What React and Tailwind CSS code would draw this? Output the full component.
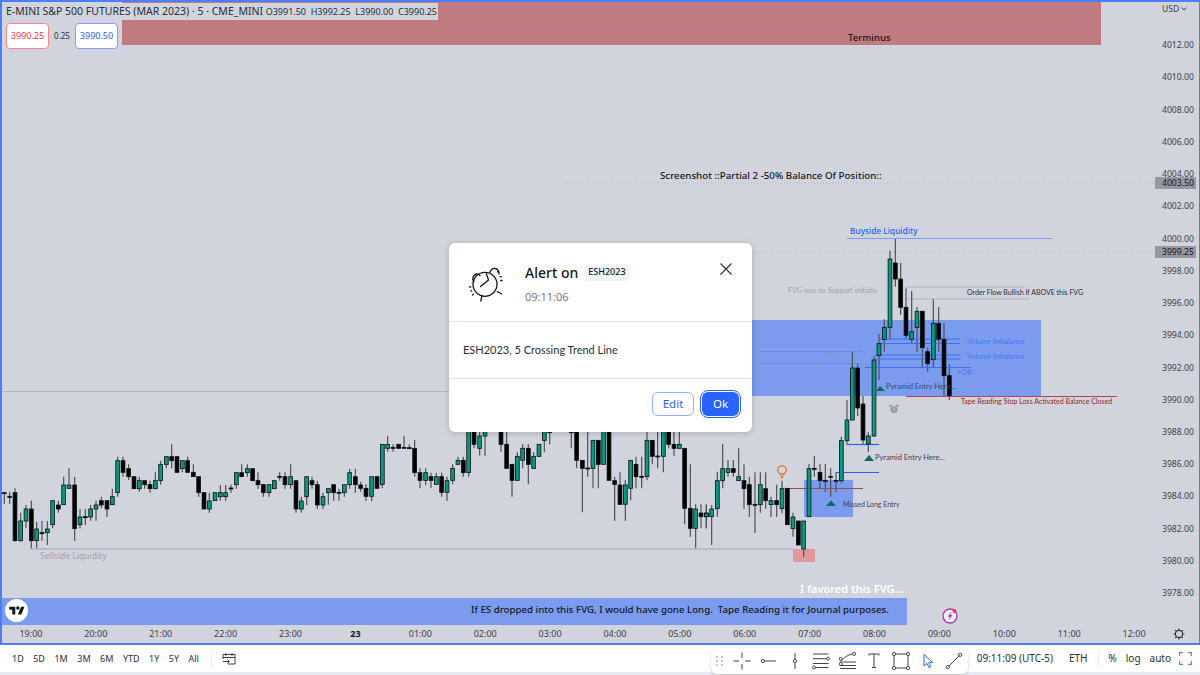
import React from "react";

// candle rows are [x, wickTop, bodyTop, bodyBottom, wickBottom, up], read off in 3x crop units
const panels = [
  { ox: 0, oy: 420, rows: [
    [13,218,218,220,252,0],[29,215,229,231,252,0],[45,205,218,362,365,0],[62,278,303,362,365,1],[78,255,267,303,325,1],
    [94,242,267,362,385,0],[110,305,327,362,385,1],[126,303,338,340,362,0],[142,303,327,338,375,1],[158,242,242,314,325,1],
    [175,242,255,267,278,0],[191,170,195,254,255,1],[207,145,195,205,205,1],[224,170,195,326,362,0],[240,267,291,314,325,1],
    [256,267,290,292,315,0],[272,255,267,291,302,1],[288,242,255,267,302,1],[304,230,242,255,265,0],[321,242,242,267,290,0],
    [337,206,230,254,255,1],[353,110,122,218,230,1],[369,110,122,157,170,0],[386,133,146,170,180,0],[402,170,170,206,206,0],
    [418,170,182,206,215,1],[434,182,182,194,206,0],[450,182,194,206,218,0],[466,157,182,206,206,1],[482,122,133,182,194,1],
    [499,110,110,133,145,1],[515,73,110,122,145,0],[531,110,110,157,157,0],[547,122,122,146,157,1],[563,110,122,157,157,0],
    [580,133,157,170,170,0],[596,170,170,218,230,0],[612,218,218,267,267,0],[628,218,243,267,278,1],[645,218,218,242,242,1],
    [661,195,218,230,242,1],[677,195,218,230,242,1],[693,194,204,206,218,0],[709,157,158,194,206,1],[725,133,158,170,170,0],
    [742,133,146,158,170,1],[758,146,146,182,182,0],[774,157,182,194,206,0],[790,194,194,218,230,0],[807,194,194,218,230,1],
    [823,182,182,206,206,1],[839,157,169,171,182,0],[855,157,170,194,206,0],[872,133,170,194,206,1],[888,182,182,267,278,0],
    [904,230,243,267,278,1],[920,170,170,230,255,1],[936,170,182,194,206,0],[952,182,194,255,267,0],[969,218,230,255,267,1],
    [985,206,206,218,254,1],[1001,194,194,218,242,0],[1017,206,217,219,242,0],[1033,194,194,218,230,1],[1049,146,158,194,206,1],
    [1066,146,170,194,218,0],
  ]},
  { ox: 350, oy: 425, rows: [
    [32,170,180,190,200,0],[48,178,190,214,228,0],[65,155,155,214,228,1],[81,155,155,190,190,0],[97,58,58,178,190,1],
    [113,33,58,70,80,1],[129,58,67,69,80,0],[146,58,58,70,70,0],[162,33,67,69,70,0],[178,58,68,70,70,0],
    [194,45,70,143,155,0],[210,130,143,166,190,0],[227,130,143,166,180,1],[243,143,155,166,190,0],[259,143,155,178,178,1],
    [275,143,155,202,215,0],[291,155,167,202,228,1],[308,118,130,166,178,1],[324,95,106,118,118,1],[340,95,106,143,155,0],
    [356,20,20,143,155,1],[372,20,20,58,70,0],[389,20,33,70,92,1],[405,20,20,33,92,1],[453,20,20,58,80,0],
    [470,20,58,130,130,0],[486,118,118,166,215,0],[502,82,94,166,167,1],[518,58,70,106,130,1],[535,58,70,118,178,0],
    [551,82,94,130,130,1],[567,58,58,94,94,1],[583,20,20,46,82,1],[599,20,20,20,58,0],[664,20,20,21,70,0],
    [680,20,20,106,130,0],[697,106,106,130,262,0],[713,20,129,131,155,0],[729,45,46,130,190,1],[745,46,46,118,190,0],
    [761,20,20,118,118,1],[777,20,20,166,166,0],[794,155,167,178,287,0],[810,142,180,238,240,0],[826,165,180,238,287,1],
    [842,106,106,190,226,1],[858,95,118,155,190,0],[875,95,154,156,190,0],[891,20,46,155,166,1],[907,45,46,94,118,0],
    [923,20,93,95,130,0],[940,20,20,94,142,1],[956,20,20,58,70,0],[972,20,58,70,94,0],[988,20,58,70,70,1],
    [1004,70,70,250,298,0],[1021,118,250,310,335,0],[1037,238,252,310,370,1],[1053,238,264,275,310,0],[1069,238,264,275,310,1],
  ]},
  { ox: 700, oy: 420, rows: [
    [19,255,280,290,325,1],[35,255,267,290,375,1],[52,155,182,266,290,1],[68,72,146,182,205,1],[84,120,146,157,170,1],
    [100,120,146,157,170,0],[116,85,170,182,182,1],[132,133,182,206,266,0],[148,170,194,254,290,0],[165,157,253,255,338,0],
    [181,157,194,254,278,1],[197,157,206,242,266,0],[213,230,242,254,290,1],[230,194,242,254,290,0],[246,182,206,266,280,1],
    [262,205,205,314,315,0],[279,278,291,326,350,1],[295,303,303,375,375,0],[311,303,303,387,410,1],[327,132,146,290,290,1],
    [343,108,145,147,170,0],[360,132,157,182,205,0],[376,132,181,183,216,0],[392,145,169,171,230,0],[408,157,181,183,216,0],
    [424,50,62,182,190,1],
  ]},
  { ox: 835, oy: 340, rows: [
    [36,180,240,302,315,1],[52,35,84,240,240,1],[68,72,84,204,228,0],[84,168,192,300,312,0],[100,276,288,312,336,1],
    [117,48,60,288,290,1],
  ]},
  { ox: 760, oy: 220, rows: [
    [357,342,371,407,480,1],[373,298,322,358,395,1],[390,92,117,322,358,1],[406,57,129,177,200,0],[422,128,177,262,285,0],
    [438,205,262,346,358,0],[455,213,335,358,370,1],[471,262,274,322,395,1],[487,272,274,383,443,0],[503,383,395,431,455,0],
    [520,238,310,419,443,1],[536,262,310,358,395,0],[552,310,358,467,527,0],[568,432,467,527,540,0],
  ]},
];

const candles = panels.flatMap((p) =>
  p.rows.map(([x, wt, bt, bb, wb, up]) => ({
    x: p.ox + x / 3,
    wt: p.oy + wt / 3,
    bt: p.oy + bt / 3,
    bb: p.oy + bb / 3,
    wb: p.oy + wb / 3,
    up,
  }))
);

const hours = ["19:00", "20:00", "21:00", "22:00", "23:00", "23", "01:00", "02:00", "03:00", "04:00", "05:00", "06:00", "07:00", "08:00", "09:00", "10:00", "11:00", "12:00"];
const prices = ["4012.00", "4010.00", "4008.00", "4006.00", "4004.00", "4002.00", "4000.00", "3998.00", "3996.00", "3994.00", "3992.00", "3990.00", "3988.00", "3986.00", "3984.00", "3982.00", "3980.00", "3978.00"];
const ranges = ["1D", "5D", "1M", "3M", "6M", "YTD", "1Y", "5Y", "All"];

function ChartDrawing() {
  return (
    <svg className="absolute left-0 top-0" width="1200" height="625" viewBox="0 0 1200 625">
      <rect x="122" y="0" width="979" height="45" fill="#c07b80" />
      <line x1="0" y1="391.5" x2="760" y2="391.5" stroke="#b2b5be" />
      <line x1="30" y1="549" x2="793" y2="549" stroke="#b2b5be" strokeWidth="1.5" />
      <rect x="752" y="320" width="289" height="76" fill="#7a9bee" />
      <rect x="804" y="480" width="49" height="37" fill="#7a9bee" />
      <rect x="793" y="549" width="22" height="13" fill="#e0979d" />
      <rect x="0" y="598" width="907" height="27" fill="#7a9bee" />
      <line x1="565" y1="183" x2="1155" y2="183" stroke="#b8bbc4" strokeDasharray="1 2" />
      <line x1="752" y1="252" x2="1155" y2="252" stroke="#b8bbc4" strokeDasharray="1 2" />
      <line x1="847" y1="238.5" x2="1052" y2="238.5" stroke="#7d9cf0" strokeWidth="1.2" />
      <line x1="905" y1="287" x2="1025" y2="287" stroke="#b2b5be" />
      <line x1="905" y1="299" x2="1030" y2="299" stroke="#b2b5be" />
      <line x1="760" y1="351.5" x2="863" y2="351.5" stroke="#6f8bdc" />
      <line x1="760" y1="363.5" x2="863" y2="363.5" stroke="#6f8bdc" />
      {candles.map((c, i) => (
        <line key={i} x1={c.x} y1={c.wt} x2={c.x} y2={c.wb} stroke="#4e5159" strokeWidth="1.2" />
      ))}
      <g stroke="#3f6ff0" strokeWidth="1">
        <line x1="880" y1="339" x2="960" y2="339" />
        <line x1="880" y1="343.5" x2="960" y2="343.5" />
        <line x1="875" y1="355" x2="960" y2="355" />
        <line x1="875" y1="359" x2="960" y2="359" />
        <line x1="865" y1="367.5" x2="971" y2="367.5" />
      </g>
      <line x1="906" y1="396.5" x2="1117" y2="396.5" stroke="#b5434c" strokeWidth="1.2" />
      <line x1="785" y1="488.5" x2="863" y2="488.5" stroke="#9e4a55" strokeWidth="1.2" />
      <line x1="836" y1="472.5" x2="879" y2="472.5" stroke="#2962ff" strokeWidth="1.2" />
      <line x1="847" y1="444.5" x2="879" y2="444.5" stroke="#2962ff" strokeWidth="1.2" />
      {candles.map((c, i) => (
        <rect
          key={i}
          x={c.x - 1.9}
          y={c.bt}
          width="3.8"
          height={Math.max(c.bb - c.bt, 1)}
          fill={c.up ? "#089981" : "#000000"}
          stroke="#0c0f12"
          strokeWidth="0.8"
        />
      ))}
      <polygon points="876,391 880,386 885,391" fill="#0f6b58" />
      <polygon points="864,461 869,455 874,461" fill="#0f6b58" />
      <polygon points="826,506 831,500.5 836,506" fill="#0f6b58" />
      {/* bulb */}
      <g fill="none" stroke="#ef6c2f" strokeWidth="1.3">
        <path d="M780 474c-1.5-1-2.3-2.4-2.3-3.9a4.3 4.3 0 0 1 8.6 0c0 1.5-.8 2.9-2.3 3.9z" />
        <path d="M780.5 476.2h3M781 477.6h2" />
      </g>
      {/* small alarm */}
      <g fill="#9b9ea6">
        <circle cx="894" cy="409.5" r="3.6" />
        <circle cx="890.6" cy="405.8" r="1.3" />
        <circle cx="897.4" cy="405.8" r="1.3" />
      </g>
      <path d="M894 407.5v2.2l1.3.8" fill="none" stroke="#d1d4dc" strokeWidth="0.7" />
      {/* purple bolt */}
      <circle cx="950" cy="616" r="7" fill="#f4eef7" stroke="#a63dbb" strokeWidth="1.4" />
      <path d="M951.5 611.5l-3.8 5.2h2.2l-1.3 3.8 3.9-5.4h-2.2z" fill="#a63dbb" />
      <circle cx="954.5" cy="611" r="2" fill="#f23645" />
    </svg>
  );
}

function Note({ className, children }) {
  return <div className={"absolute whitespace-pre leading-none " + className}>{children}</div>;
}

function AlarmClock() {
  return (
    <svg width="48" height="48" viewBox="0 0 48 48" fill="none" stroke="#131722" strokeWidth="1.3" strokeLinecap="round">
      <circle cx="20" cy="24.3" r="12" />
      <path d="M21.3 13.7 L23.5 20 L15.5 26.5" />
      <path d="M9 21.5a4.5 4.5 0 0 1 2.3-7.5 4.5 4.5 0 0 1 3.7 1.5" />
      <path d="M25 12.5a4.5 4.5 0 0 1 5-4 4.5 4.5 0 0 1 4 5.3" />
      <path d="M32.3 31.5l4.5 2.5M16.8 36.5l-1 4.5" />
      <path d="M32.5 11.5l.7 1M35 16.5l1.3.4M35.7 20.5h1.4M4.5 27l1.3-.2M6 31l.7-.5M7.5 35l.9-.8" />
    </svg>
  );
}

function AlertDialog() {
  return (
    <div className="absolute left-[449px] top-[243px] w-[303px] h-[189px] bg-white rounded-md shadow-[0_1px_6px_rgba(0,0,0,0.18)] flex flex-col text-[#131722]">
      <div className="h-[79px] border-b border-[#e0e3eb] relative flex pl-[16px] pt-[17px]">
        <AlarmClock />
        <div className="ml-[12px]">
          <div className="flex items-center h-[24px] gap-[6px]">
            <span className="text-[14px] font-medium">Alert on</span>
            <span className="h-[17px] px-[4px] rounded bg-[#f0f3fa] text-[9px] font-medium flex items-center">ESH2023</span>
          </div>
          <div className="text-[11px] text-[#787b86] mt-[5px]">09:11:06</div>
        </div>
        <svg className="absolute right-[20px] top-[20px]" width="12" height="12" viewBox="0 0 12 12" stroke="#2a2e39" strokeWidth="1.1">
          <path d="M.5.5l11 11M11.5.5l-11 11" />
        </svg>
      </div>
      <div className="h-[57px] border-b border-[#e0e3eb] flex items-center pl-[14px] text-[11px] text-[#2a2e39] font-['Lato',sans-serif]">
        ESH2023, 5 Crossing Trend Line
      </div>
      <div className="flex-1 flex items-start justify-end gap-[8px] pt-[13px] pr-[13px]">
        <button className="h-[24px] w-[42px] rounded-md border border-[#8fb0ff] text-[#2962ff] text-[11.5px]">Edit</button>
        <button className="h-[24px] w-[37px] rounded-md bg-[#2962ff] text-white text-[11.5px] outline-1 outline-offset-1 outline-[#2962ff]">Ok</button>
      </div>
    </div>
  );
}

const toolIcons = [
  <path key="a" d="M.5 9H6M12 9h5.5M9 .5V6M9 12v5.5" />,
  <g key="b"><circle cx="4" cy="9" r="1.6" /><path d="M5.6 9H17" /></g>,
  <g key="c"><circle cx="9" cy="9" r="1.6" /><path d="M9 1v6.4M9 10.6V17" /></g>,
  <g key="d"><path d="M1 2h15.5M1 6.7h13.5M3 15.5h13.5M1 11.5h15.5" /><circle cx="16" cy="6.7" r="1.5" /><circle cx="2" cy="15.5" r="1.5" /></g>,
  <g key="e"><path d="M1 11c3-5 6-7 12-9" /><circle cx="15" cy="1.8" r="1.6" /><circle cx="1.6" cy="7" r="1.5" /><circle cx="1.6" cy="12" r="1.5" /><path d="M3 10h14M1 13.5h16M1 16.5h16" /></g>,
  <path key="f" d="M4 3.5V2h10v1.5M9 2v13.5M7 15.5h4" />,
  <g key="g"><rect x="2" y="2" width="14" height="14" /><circle cx="2" cy="2" r="1.6" fill="#fff" /><circle cx="16" cy="2" r="1.6" fill="#fff" /><circle cx="2" cy="16" r="1.6" fill="#fff" /><circle cx="16" cy="16" r="1.6" fill="#fff" /></g>,
  <path key="h" stroke="#2962ff" d="M5 2.5v11.5l3-2.6 2 4.2 1.8-.9-2-4.1h4z" />,
  <g key="i"><path d="M3.8 14.2L14.2 3.8" /><circle cx="2.8" cy="15.2" r="1.6" /><circle cx="15.2" cy="2.8" r="1.6" /></g>,
];

function DrawingToolbar() {
  return (
    <div className="relative z-10 self-start mt-[3px] ml-auto w-[257px] h-[26px] rounded-md bg-white shadow-[0_1px_3px_rgba(0,0,0,0.2)] flex items-center pl-[5px]">
      <svg width="8" height="10" viewBox="0 0 8 10" fill="#c1c4cd">
        <rect x="0" y="0" width="2" height="2" /><rect x="5" y="0" width="2" height="2" />
        <rect x="0" y="4" width="2" height="2" /><rect x="5" y="4" width="2" height="2" />
        <rect x="0" y="8" width="2" height="2" /><rect x="5" y="8" width="2" height="2" />
      </svg>
      <div className="flex ml-[4.5px]">
        {toolIcons.map((icon, i) => (
          <div key={i} className="w-[26.6px] flex justify-center">
            <svg width="18" height="18" viewBox="0 0 18 18" fill="none" stroke="#40434d" strokeWidth="1">{icon}</svg>
          </div>
        ))}
      </div>
    </div>
  );
}

export default function App() {
  return (
    <div className="w-[1200px] h-[675px] overflow-hidden bg-white flex flex-col font-['Noto_Sans',sans-serif] text-[#131722]">
      <div className="relative h-[645px] bg-[#d1d4dc] flex flex-col shrink-0">
        <div className="flex h-[625px]">
          <div className="relative flex-1">
            <ChartDrawing />

            {/* legend */}
            <div className="absolute left-[4px] top-[3px] w-[434px] h-[17px] bg-[#d1d4dc] flex items-center justify-between pl-[2px] pr-[1px] whitespace-pre">
              <span className="text-[10.5px] text-[#2a2e39]">E-MINI S&amp;P 500 FUTURES (MAR 2023) · 5 · CME_MINI</span>
              <span className="text-[9px] text-[#2a2e39]">O3991.50  H3992.25  L3990.00  C3990.25</span>
            </div>
            <div className="absolute left-[6px] top-[23px] flex items-center">
              <div className="w-[43px] h-[26px] rounded bg-white border border-[#f7878f] text-[#f23645] text-[9px] flex items-center justify-center">3990.25</div>
              <div className="w-[26px] text-center text-[8px] text-[#2a2e39]">0.25</div>
              <div className="w-[43px] h-[26px] rounded bg-white border border-[#7f9ef7] text-[#2962ff] text-[9px] flex items-center justify-center">3990.50</div>
            </div>

            <Note className="left-[848px] top-[33px] text-[9.6px] font-medium">Terminus</Note>
            <Note className="left-[660px] top-[171px] text-[9.75px] font-medium">Screenshot ::Partial 2 -50% Balance Of Position::</Note>
            <Note className="left-[850px] top-[227px] text-[8.3px] font-medium text-[#2962ff]">Buyside Liquidity</Note>
            <Note className="left-[788px] top-[287px] text-[7.2px] text-[#a0a3ab] font-['Lato',sans-serif]">FVG was no Support initially</Note>
            <Note className="left-[967px] top-[289px] text-[7px] text-[#2a2e39] font-['Lato',sans-serif]">Order Flow Bullish If ABOVE this FVG</Note>
            <Note className="left-[967px] top-[338px] text-[7.2px] text-[#4a76f5] font-['Lato',sans-serif]">Volume Imbalance</Note>
            <Note className="left-[967px] top-[353px] text-[7.2px] text-[#4a76f5] font-['Lato',sans-serif]">Volume Imbalance</Note>
            <Note className="left-[826px] top-[352px] text-[7.5px] text-[#8d97bd] font-['Lato',sans-serif]">FVG</Note>
            <Note className="left-[957px] top-[369px] text-[7.5px] text-[#4a76f5] font-['Lato',sans-serif]">+OB</Note>
            <Note className="left-[886px] top-[383px] text-[7.5px] text-[#38496f] font-['Lato',sans-serif]">Pyramid Entry Here...</Note>
            <Note className="left-[961px] top-[398px] text-[7px] text-[#8a2a30] font-['Lato',sans-serif]">Tape Reading Stop Loss Activated Balance Closed</Note>
            <Note className="left-[875px] top-[454px] text-[7.5px] text-[#3f424d] font-['Lato',sans-serif]">Pyramid Entry Here...</Note>
            <Note className="left-[843px] top-[501px] text-[7px] text-[#3f424d] font-['Lato',sans-serif]">Missed Long Entry</Note>
            <Note className="left-[40px] top-[552px] text-[8.5px] text-[#a0a3ab]">Sellside Liquidity</Note>
            <Note className="left-[800px] top-[583px] text-[11px] font-semibold text-white">I favored this FVG...</Note>
            <Note className="left-[471px] top-[605px] text-[9.7px] font-medium">If ES dropped into this FVG, I would have gone Long.  Tape Reading it for Journal purposes.</Note>

            {/* logo */}
            <div className="absolute left-[5px] top-[599px] w-[23px] h-[23px] rounded-full bg-white flex items-center justify-center">
              <svg width="16" height="12" viewBox="0 0 36 28" fill="#131722">
                <path d="M14 22H7V11H0V4h14v18zM28 22h-8l7.5-18h8L28 22z" />
                <circle cx="20" cy="7" r="4" />
              </svg>
            </div>

            <AlertDialog />
          </div>

          {/* price scale */}
          <div className="relative w-[44px] shrink-0 flex flex-col text-[8.6px] text-[#3d404a]">
            <div className="h-[29.5px] shrink-0 pt-[3px] pl-[6px] flex items-start gap-[2px]">
              USD
              <svg className="mt-[4px]" width="6" height="4" viewBox="0 0 6 4" fill="none" stroke="#3d404a"><path d="M.5.5L3 3 5.5.5" /></svg>
            </div>
            {prices.map((p) => (
              <div key={p} className="h-[32.24px] shrink-0 flex items-center pl-[6px]">{p}</div>
            ))}
            <div className="absolute left-[-1px] top-[177px] w-[41px] h-[12px] bg-[#9598a1] flex items-center pl-[7px] text-[#131722]">4003.50</div>
            <div className="absolute left-[-1px] top-[246px] w-[41px] h-[12px] bg-[#9598a1] flex items-center pl-[7px] text-[#131722]">3999.25</div>
          </div>
        </div>

        {/* time scale */}
        <div className="flex h-[18px] items-center text-[9px] text-[#3d404a] ml-[-1.5px]">
          {hours.map((h) => (
            <div key={h} className={"w-[64.9px] shrink-0 text-center " + (h === "23" ? "font-bold text-[#131722]" : "")}>{h}</div>
          ))}
          <svg className="ml-[6px]" width="12" height="12" viewBox="0 0 12 12" fill="none" stroke="#2a2e39" strokeWidth="1.1">
            <circle cx="6" cy="6" r="3.6" />
            <path d="M6 .5v1.6M6 9.9v1.6M.5 6h1.6M9.9 6h1.6M2.1 2.1l1.1 1.1M8.8 8.8l1.1 1.1M2.1 9.9l1.1-1.1M8.8 3.2l1.1-1.1" />
          </svg>
        </div>

        <div className="absolute inset-0 border-2 border-r border-[#4d7ef7] pointer-events-none"></div>
      </div>

      {/* bottom bar */}
      <div className="h-[27px] shrink-0 bg-white flex items-center pl-[12px] pr-[8px] text-[10px] text-[#2a2e39]">
        <div className="flex gap-[9.5px] text-[9px]">
          {ranges.map((r) => (
            <span key={r}>{r}</span>
          ))}
        </div>
        <div className="w-px h-[16px] bg-[#e8eaf0] ml-[12px]"></div>
        <svg className="ml-[10px]" width="14" height="14" viewBox="0 0 14 14" fill="none" stroke="#40434d" strokeWidth="1">
          <path d="M1 7V2.5h12V12H6M4 1v3M10 1v3M1 5.5h12M1 9.5h6M5.5 7.5l2 2-2 2" />
        </svg>
        <DrawingToolbar />
        <span className="ml-[9px]">09:11:09 (UTC-5)</span>
        <span className="ml-[16px]">ETH</span>
        <div className="w-px h-[16px] bg-[#e8eaf0] ml-[11px]"></div>
        <span className="ml-[9px]">%</span>
        <span className="ml-[9px]">log</span>
        <span className="ml-[9px]">auto</span>
        <svg className="ml-[8px]" width="13" height="13" viewBox="0 0 13 13" fill="none" stroke="#5b84f5" strokeWidth="1.2">
          <path d="M.6 4V.6H4M9 .6h3.4V4M12.4 9v3.4H9M4 12.4H.6V9" />
        </svg>
      </div>
      <div className="flex-1 bg-[#e8eaf1]"></div>
    </div>
  );
}
